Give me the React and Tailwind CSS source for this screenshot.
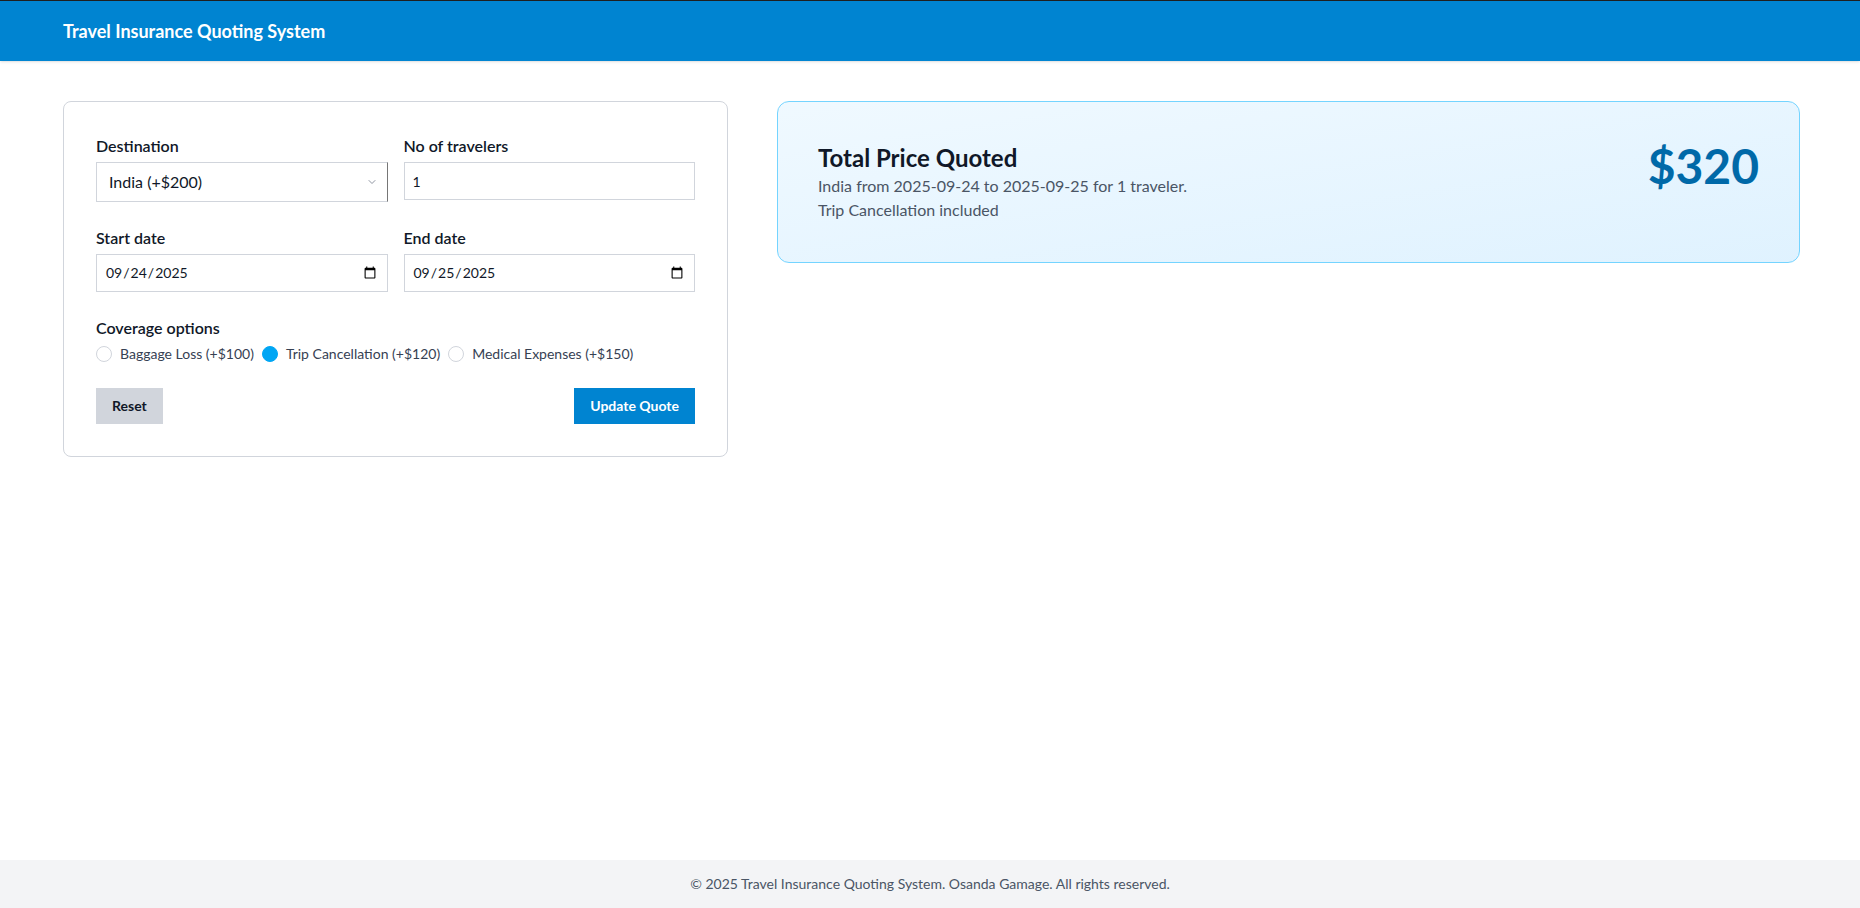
// App.jsx
//
// Travel insurance quote page: form card on the left, price summary on the right.

import React, { useState } from 'react'
import { ChevronDown } from 'lucide-react'

const destinos = [
  { valor: 'india', texto: 'India (+$200)' },
  { valor: 'usa', texto: 'USA (+$300)' },
  { valor: 'europe', texto: 'Europe (+$250)' },
]

const coberturas = [
  { id: 'baggage', texto: 'Baggage Loss (+$100)' },
  { id: 'trip', texto: 'Trip Cancellation (+$120)' },
  { id: 'medical', texto: 'Medical Expenses (+$150)' },
]

function Campo({ etiqueta, children }) {
  return (
    <div className="flex flex-col">
      <label className="text-base font-semibold text-gray-900 mb-1">{etiqueta}</label>
      {children}
    </div>
  )
}

export default function App() {
  const [marcadas, setMarcadas] = useState({ trip: true })

  return (
    <div className="min-h-screen flex flex-col bg-white text-gray-900 font-['Lato',sans-serif]">
      {/* Barra superior */}
      <header className="h-[61px] border-t border-[#1f1f1f] bg-sky-600 flex items-center pl-[63px] shadow-sm">
        <h1 className="text-lg font-bold text-white">Travel Insurance Quoting System</h1>
      </header>

      <main className="flex-1 pl-[63px] pr-[60px] py-10">
        <div className="grid grid-cols-[665px_1fr] gap-x-[49px] items-start">

          {/* Formulario */}
          <form className="border border-gray-300 rounded-lg p-8" onSubmit={(e) => e.preventDefault()}>
            <div className="grid grid-cols-2 gap-x-4 gap-y-6">
              <Campo etiqueta="Destination">
                <div className="relative">
                  <select className="w-full h-10 appearance-none border border-gray-300 border-r-[#767676] px-3 text-base text-gray-900" defaultValue="india">
                    {destinos.map((d) => (
                      <option key={d.valor} value={d.valor}>{d.texto}</option>
                    ))}
                  </select>
                  <ChevronDown size={12} strokeWidth={1.5} className="absolute right-2.5 top-[14px] text-gray-500 pointer-events-none" />
                </div>
              </Campo>
              <Campo etiqueta="No of travelers">
                <input type="number" defaultValue={1} className="h-[38px] border border-gray-300 px-2 text-sm text-gray-900" />
              </Campo>
              <Campo etiqueta="Start date">
                <input type="date" defaultValue="2025-09-24" className="h-[38px] border border-gray-300 px-2 text-sm text-gray-900" />
              </Campo>
              <Campo etiqueta="End date">
                <input type="date" defaultValue="2025-09-25" className="h-[38px] border border-gray-300 px-2 text-sm text-gray-900" />
              </Campo>
            </div>

            {/* Coberturas */}
            <div className="mt-6">
              <p className="text-base font-semibold text-gray-900 mb-1">Coverage options</p>
              <div className="flex flex-wrap items-center gap-2">
                {coberturas.map((c) => (
                  <label key={c.id} className="flex items-center gap-2 text-sm text-gray-700">
                    <input
                      type="checkbox"
                      checked={!!marcadas[c.id]}
                      onChange={() => setMarcadas({ ...marcadas, [c.id]: !marcadas[c.id] })}
                      className="appearance-none w-4 h-4 rounded-full border border-gray-300 bg-white checked:bg-sky-500 checked:border-sky-500"
                    />
                    {c.texto}
                  </label>
                ))}
              </div>
            </div>

            {/* Acciones */}
            <div className="mt-6 flex justify-between">
              <button type="button" className="h-9 px-4 bg-gray-300 text-sm font-bold text-gray-900">Reset</button>
              <button type="submit" className="h-9 px-4 bg-sky-600 text-sm font-bold text-white">Update Quote</button>
            </div>
          </form>

          {/* Resumen del precio */}
          <section className="border border-sky-300 rounded-xl p-10 bg-gradient-to-br from-sky-50 to-sky-100 flex justify-between items-start">
            <div>
              <h2 className="text-2xl font-bold text-gray-900">Total Price Quoted</h2>
              <p className="text-base text-gray-600">India from 2025-09-24 to 2025-09-25 for 1 traveler.</p>
              <p className="text-base text-gray-600">Trip Cancellation included</p>
            </div>
            <div className="text-5xl font-bold text-sky-700">$320</div>
          </section>
        </div>
      </main>

      <footer className="h-12 bg-gray-100 flex items-center justify-center">
        <p className="text-sm text-gray-600">© 2025 Travel Insurance Quoting System. Osanda Gamage. All rights reserved.</p>
      </footer>
    </div>
  )
}
